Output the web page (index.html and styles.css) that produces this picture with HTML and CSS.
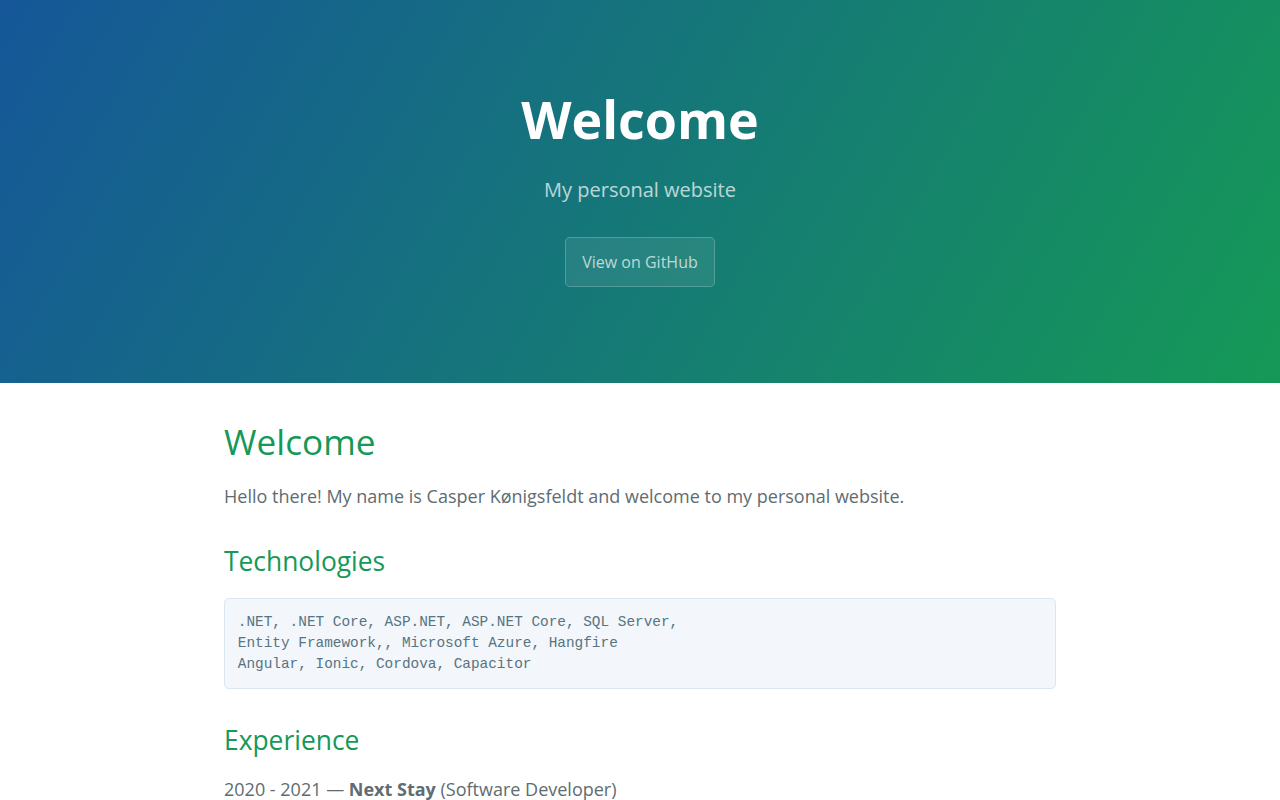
FILE: index.html
```html
<!DOCTYPE html>
<html lang="en">
<head>
<meta charset="UTF-8">
<meta name="viewport" content="width=device-width, initial-scale=1.0">
<title>Welcome | My personal website</title>
<link rel="stylesheet" href="styles.css">
</head>
<body>

<section class="page-header">
    <h1 class="project-name">Welcome</h1>
    <h2 class="project-tagline">My personal website</h2>
    <a href="#" class="btn">View on GitHub</a>
</section>

<main class="main-content">
    <h1>Welcome</h1>
    <p>Hello there! My name is Casper Kønigsfeldt and welcome to my personal website.</p>

    <h2>Technologies</h2>
    <pre><code>.NET, .NET Core, ASP.NET, ASP.NET Core, SQL Server,
Entity Framework,, Microsoft Azure, Hangfire
Angular, Ionic, Cordova, Capacitor</code></pre>

    <h2>Experience</h2>
    <p>2020 - 2021 — <strong>Next Stay</strong> (Software Developer)</p>
</main>

</body>
</html>
```
FILE: styles.css
```css
* {
    box-sizing: border-box;
}

body {
    padding: 0;
    margin: 0;
    font-family: "Open Sans", "Helvetica Neue", Helvetica, Arial, sans-serif;
    font-size: 16px;
    line-height: 1.5;
    color: #606c71;
}

a {
    color: #1e6bb8;
    text-decoration: none;
}

.page-header {
    color: #fff;
    text-align: center;
    background-color: #159957;
    background-image: linear-gradient(120deg, #155799, #159957);
    padding: 5rem 6rem;
}

.project-name {
    font-size: 3.25rem;
    margin-top: 0;
    margin-bottom: 0.1rem;
}

.project-tagline {
    font-size: 1.25rem;
    font-weight: normal;
    opacity: 0.7;
    margin-top: 0.83em;
    margin-bottom: 2rem;
}

.btn {
    display: inline-block;
    margin-bottom: 1rem;
    padding: 0.75rem 1rem;
    color: rgba(255, 255, 255, 0.7);
    background-color: rgba(255, 255, 255, 0.08);
    border: 1px solid rgba(255, 255, 255, 0.2);
    border-radius: 0.3rem;
}

.btn:hover {
    color: rgba(255, 255, 255, 0.8);
    background-color: rgba(255, 255, 255, 0.2);
}

.main-content {
    max-width: 64rem;
    padding: 2rem 6rem;
    margin: 0 auto;
    font-size: 1.1rem;
    word-wrap: break-word;
}

.main-content > :first-child {
    margin-top: 0;
}

.main-content h1,
.main-content h2 {
    margin-top: 2rem;
    margin-bottom: 1rem;
    font-weight: normal;
    color: #159957;
}

.main-content h1 {
    font-size: 2em;
}

.main-content h2 {
    font-size: 1.5em;
}

.main-content p {
    margin: 0 0 1rem;
    font-size: 18px;
}

.main-content pre {
    padding: 0.8rem;
    margin: 0 0 1rem;
    font-family: "Liberation Mono", Consolas, Menlo, Courier, monospace;
    font-size: 0.9rem;
    line-height: 21px;
    color: #567482;
    background-color: #f3f6fa;
    border: 1px solid #dce6f0;
    border-radius: 0.3rem;
    overflow: auto;
}

.main-content pre code {
    font-family: inherit;
    font-size: inherit;
    line-height: inherit;
}

.main-content strong {
    font-weight: bold;
}
```
